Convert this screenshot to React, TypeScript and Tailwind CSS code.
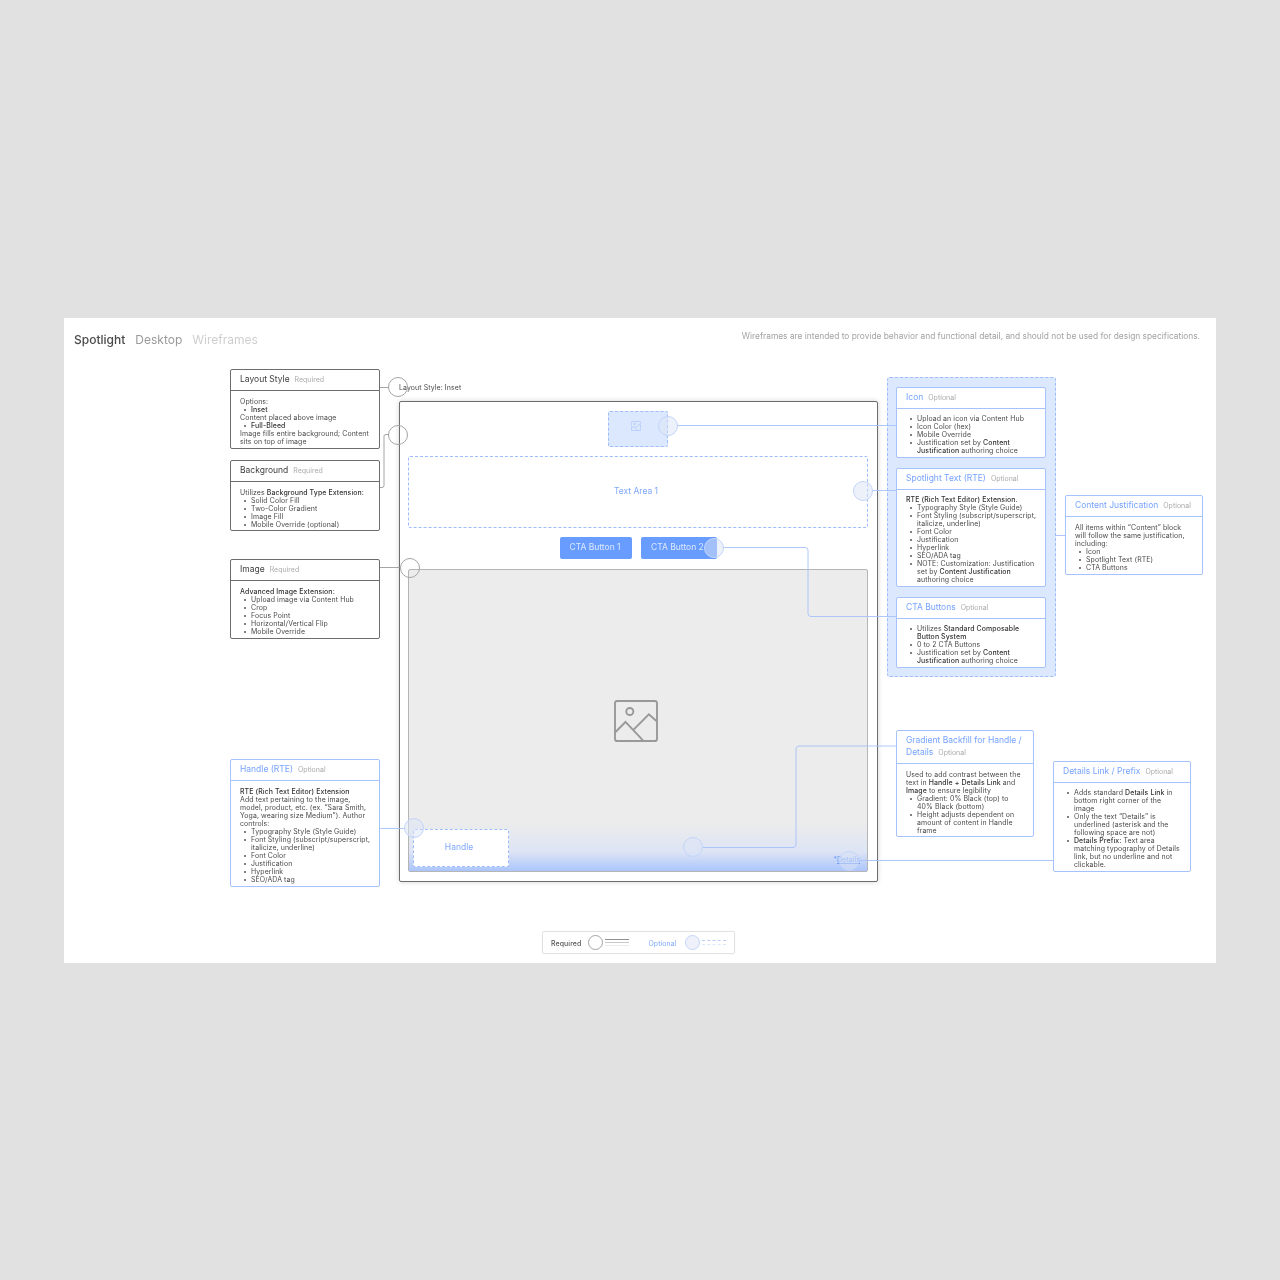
import type { ReactNode } from 'react';

interface NoteCardProps {
  title: string;
  tag: string;
  className: string;
  blue?: boolean;
  headerClass?: string;
  bodyClass?: string;
  children: ReactNode;
}

function NoteCard({ title, tag, className, blue, headerClass, bodyClass, children }: NoteCardProps) {
  return (
    <div
      className={`rounded-[2px] border bg-white ${blue ? 'border-[#a6c2fb]' : 'border-[#6d6d6d]'} ${className}`}
    >
      <div
        className={`border-b px-[9px] text-[8.5px] ${blue ? 'border-[#a6c2fb] text-[#76a3ff]' : 'border-[#6d6d6d] text-[#3d3d3d]'} ${headerClass ?? 'flex h-[21px] items-center'}`}
      >
        <span>
          {title}
          <span className="ml-[5px] text-[7px] text-[#aaaaaa]">{tag}</span>
        </span>
      </div>
      <div className={`px-[9px] text-[6.95px] leading-[8px] tracking-[0.1px] text-[#4a4a4a] ${bodyClass ?? 'pt-[7px]'}`}>
        {children}
      </div>
    </div>
  );
}

function Bullets({ items }: { items: ReactNode[] }) {
  return (
    <ul className="ml-[11px]">
      {items.map((item, i) => (
        <li
          key={i}
          className="relative before:absolute before:-left-[7px] before:top-[3px] before:h-[2px] before:w-[2px] before:rounded-full before:bg-[#555555]"
        >
          {item}
        </li>
      ))}
    </ul>
  );
}

function B({ children }: { children: ReactNode }) {
  return <span className="font-medium text-[#333333]">{children}</span>;
}

function ImageGlyph({ className }: { className: string }) {
  return (
    <svg viewBox="0 0 46 44" fill="none" stroke="currentColor" strokeWidth="2" className={className}>
      <rect x="1" y="1" width="44" height="42" rx="2.5" />
      <circle cx="16.5" cy="12" r="3.7" />
      <path d="M1 34 L12 23 L31 43 M20.500 31 L36.500 15 L45 22.500" />
    </svg>
  );
}

function Marker({ className, blue }: { className: string; blue?: boolean }) {
  return (
    <div
      className={`absolute h-[20px] w-[20px] rounded-full border ${
        blue ? 'border-[#c3d5fb] bg-[#dce4f5]/50' : 'border-[#a5a5a5]'
      } ${className}`}
    />
  );
}

export default function App() {
  return (
    <div className="flex h-[1280px] items-center justify-center bg-[#e1e1e1] font-['Inter',sans-serif]">
      <div className="relative h-[645px] w-[1152px] bg-white blur-[0.3px]">
        {/* Title row */}
        <div className="flex items-start justify-between pl-[10px] pr-[16px] pt-[14px]">
          <div className="flex gap-[10px] text-[12px] leading-[16px]">
            <span className="font-medium text-[#4a4a4a]">Spotlight</span>
            <span className="text-[#9a9a9a]">Desktop</span>
            <span className="text-[#cfcfcf]">Wireframes</span>
          </div>
          <span className="text-[8.37px] leading-[9px] text-[#a3a3a3]">
            Wireframes are intended to provide behavior and functional detail, and should not be used for design specifications.
          </span>
        </div>

        {/* Wireframe */}
        <span className="absolute left-[335px] top-[66px] text-[6.950px] leading-[8px] tracking-[0.1px] text-[#4a4a4a]">
          Layout Style: Inset
        </span>
        <div className="absolute left-[335px] top-[83px] flex h-[481px] w-[479px] flex-col items-center rounded-[2px] border border-[#6d6d6d] bg-white pb-[9px] pl-[8px] pr-[9px] pt-[9px] shadow-[0_0_5px_rgba(0,0,0,0.18)]">
          <div className="flex h-[36px] w-[60px] items-center justify-center rounded-[2px] border border-dashed border-[#9dbcfc] bg-[#dce8fd]">
            <ImageGlyph className="mb-[5px] mr-[4px] h-[10px] w-[10px] text-[#8fb0f5]" />
          </div>
          <div className="mt-[9px] flex h-[72px] w-full items-center justify-center rounded-[2px] border border-dashed border-[#9dbcfc] pr-[4px] text-[8.500px] text-[#7ea8fb]">
            Text Area 1
          </div>
          <div className="mt-[9px] flex gap-[9px] pl-[1px] text-[8.500px] text-[#dce8fd]">
            <div className="flex h-[22px] w-[72px] items-center justify-center rounded-[2px] bg-[#689dff] pr-[2px]">
              CTA Button 1
            </div>
            <div className="flex h-[22px] w-[76px] items-center rounded-[2px] bg-[#689dff] pl-[10px]">
              CTA Button 2
            </div>
          </div>
          <div className="relative mt-[10px] flex w-full flex-1 items-center justify-center rounded-[2px] border border-[#b5b5b5] bg-[#ececec]">
            <ImageGlyph className="mr-[4px] mt-[2px] h-[42px] w-[44px] text-[#999999]" />
            <div className="absolute inset-x-0 bottom-0 flex h-[48px] items-end justify-between bg-gradient-to-b from-[#ececec] via-[#dde4f4] via-60% to-[#abc5fc] pb-[4px] pl-[4px] pr-[7px]">
              <div className="flex h-[38px] w-[96px] items-center justify-center rounded-[2px] border border-dashed border-[#9dbcfc] bg-white pr-[4px] text-[8.500px] text-[#7ea8fb]">
                Handle
              </div>
              <span className="mb-[3px] text-[6.950px] leading-[8px] tracking-[0.1px] text-[#6f9cf5]">
                *<span className="underline">Details</span>
              </span>
            </div>
          </div>
        </div>

        {/* Right notes, grouped on the blue dashed block */}
        <div className="absolute left-[823px] top-[59px] flex h-[300px] w-[169px] flex-col gap-[10px] rounded-[3px] border border-dashed border-[#9dbcfc] bg-[#dce8fd] pl-[8px] pr-[9px] pt-[9px]">
          <NoteCard title="Icon" tag="Optional" blue bodyClass="pt-[6px]" className="h-[71px]">
            <Bullets
              items={[
                'Upload an icon via Content Hub',
                'Icon Color (hex)',
                'Mobile Override',
                <>
                  Justification set by <B>Content Justification</B> authoring choice
                </>,
              ]}
            />
          </NoteCard>
          <NoteCard title="Spotlight Text (RTE)" tag="Optional" blue bodyClass="pt-[6px] pr-[6px]" className="h-[119px]">
            <p>
              <B>RTE (Rich Text Editor) Extension.</B>
            </p>
            <Bullets
              items={[
                'Typography Style (Style Guide)',
                'Font Styling (subscript/superscript, italicize, underline)',
                'Font Color',
                'Justification',
                'Hyperlink',
                'SEO/ADA tag',
                <>
                  NOTE: Customization: Justification set by <B>Content Justification</B> authoring choice
                </>,
              ]}
            />
          </NoteCard>
          <NoteCard title="CTA Buttons" tag="Optional" blue bodyClass="pt-[6px]" className="h-[71px]">
            <Bullets
              items={[
                <>
                  Utilizes <B>Standard Composable Button System</B>
                </>,
                '0 to 2 CTA Buttons',
                <>
                  Justification set by <B>Content Justification</B> authoring choice
                </>,
              ]}
            />
          </NoteCard>
        </div>

        {/* Connector lines */}
        <svg className="pointer-events-none absolute inset-0 h-full w-full" viewBox="64 318 1152 645" fill="none">
          <g stroke="#8f8f8f" strokeWidth="0.8">
            <path d="M380 387.500 H389" />
            <path d="M380 487.500 H382 Q384 487.500 384 485.500 V436 Q384 434.500 386 434.500 H389" />
            <path d="M380 567.500 H401" />
          </g>
          <g stroke="#a6c2fb" strokeWidth="0.9">
            <path d="M677 425.500 H896" />
            <path d="M873 490.500 H896" />
            <path d="M723 547.500 H805 Q808 547.500 808 550.500 V613.500 Q808 616.500 811 616.500 H896" />
            <path d="M703 847.500 H793 Q796 847.500 796 844.500 V749 Q796 746 799 746 H896" />
            <path d="M859 860.500 H1053" />
            <path d="M380 828.500 H405" />
            <path d="M1056 535.500 H1065" />
          </g>
        </svg>

        {/* Left notes */}
        <NoteCard title="Layout Style" tag="Required" className="absolute left-[166px] top-[51px] h-[80px] w-[150px]">
          <p>Options:</p>
          <Bullets items={[<B>Inset</B>]} />
          <p>Content placed above image</p>
          <Bullets items={[<B>Full-Bleed</B>]} />
          <p>Image fills entire background; Content sits on top of image</p>
        </NoteCard>
        <NoteCard title="Background" tag="Required" className="absolute left-[166px] top-[142px] h-[71px] w-[150px]">
          <p>
            Utilizes <B>Background Type Extension:</B>
          </p>
          <Bullets items={['Solid Color Fill', 'Two-Color Gradient', 'Image Fill', 'Mobile Override (optional)']} />
        </NoteCard>
        <NoteCard title="Image" tag="Required" className="absolute left-[166px] top-[241px] h-[80px] w-[150px]">
          <p>
            <B>Advanced Image Extension:</B>
          </p>
          <Bullets
            items={['Upload image via Content Hub', 'Crop', 'Focus Point', 'Horizontal/Vertical Flip', 'Mobile Override']}
          />
        </NoteCard>
        <NoteCard
          title="Handle (RTE)"
          tag="Optional"
          blue
          bodyClass="pt-[7px] pr-[5px]"
          className="absolute left-[166px] top-[441px] h-[128px] w-[150px]"
        >
          <p>
            <B>RTE (Rich Text Editor) Extension</B>
          </p>
          <p>Add text pertaining to the image, model, product, etc. (ex. “Sara Smith, Yoga, wearing size Medium”). Author controls:</p>
          <Bullets
            items={[
              'Typography Style (Style Guide)',
              'Font Styling (subscript/superscript, italicize, underline)',
              'Font Color',
              'Justification',
              'Hyperlink',
              'SEO/ADA tag',
            ]}
          />
        </NoteCard>

        {/* Right-hand notes outside the group */}
        <NoteCard title="Content Justification" tag="Optional" blue className="absolute left-[1001px] top-[177px] h-[80px] w-[138px]">
          <p>All items within “Content” block will follow the same justification, including:</p>
          <Bullets items={['Icon', 'Spotlight Text (RTE)', 'CTA Buttons']} />
        </NoteCard>
        <NoteCard
          title="Gradient Backfill for Handle / Details"
          tag="Optional"
          blue
          headerClass="h-[33px] pt-[3px] leading-[12px]"
          className="absolute left-[832px] top-[412px] h-[107px] w-[138px]"
        >
          <p>
            Used to add contrast between the text in <B>Handle + Details Link</B> and <B>Image</B> to ensure legibility
          </p>
          <Bullets
            items={[
              'Gradient: 0% Black (top) to 40% Black (bottom)',
              'Height adjusts dependent on amount of content in Handle frame',
            ]}
          />
        </NoteCard>
        <NoteCard
          title="Details Link / Prefix"
          tag="Optional"
          blue
          bodyClass="pt-[6px]"
          className="absolute left-[989px] top-[443px] h-[111px] w-[138px]"
        >
          <Bullets
            items={[
              <>
                Adds standard <B>Details Link</B> in bottom right corner of the image
              </>,
              'Only the text “Details” is underlined (asterisk and the following space are not)',
              <>
                <B>Details Prefix:</B> Text area matching typography of Details link, but no underline and not clickable.
              </>,
            ]}
          />
        </NoteCard>

        {/* Markers */}
        <Marker className="left-[324px] top-[59px]" />
        <Marker className="left-[324px] top-[107px]" />
        <Marker className="left-[336px] top-[240px]" />
        <Marker blue className="left-[594px] top-[98px]" />
        <Marker blue className="left-[789px] top-[163px]" />
        <Marker blue className="left-[640px] top-[220px]" />
        <Marker blue className="left-[340px] top-[500px]" />
        <Marker blue className="left-[619px] top-[519px]" />
        <Marker blue className="left-[775px] top-[533px]" />

        {/* Legend */}
        <div className="absolute left-[478px] top-[613px] flex h-[23px] w-[193px] items-center rounded-[2px] border border-[#e2e2e2] pl-[8px] text-[6.950px] tracking-[0.1px] shadow-[0_0_2px_rgba(0,0,0,0.06)]">
          <span className="mt-[4px] font-medium text-[#555555]">Required</span>
          <div className="ml-[7px] h-[15px] w-[15px] rounded-full border border-[#a5a5a5]" />
          <div className="ml-[2px] flex w-[24px] flex-col gap-[2px]">
            <div className="h-px bg-[#8f8f8f]" />
            <div className="h-px bg-[#c9c9c9]" />
            <div className="h-px bg-[#ececec]" />
          </div>
          <span className="ml-[19px] mt-[4px] text-[#7ea8fb]">Optional</span>
          <div className="ml-[8px] h-[15px] w-[15px] rounded-full border border-[#c3d5fb] bg-[#eef1f9]" />
          <div className="ml-[2px] flex w-[24px] flex-col gap-[3px]">
            <div className="border-t border-dashed border-[#b9cffb]" />
            <div className="border-t border-dashed border-[#dbe6fd]" />
          </div>
        </div>
      </div>
    </div>
  );
}
